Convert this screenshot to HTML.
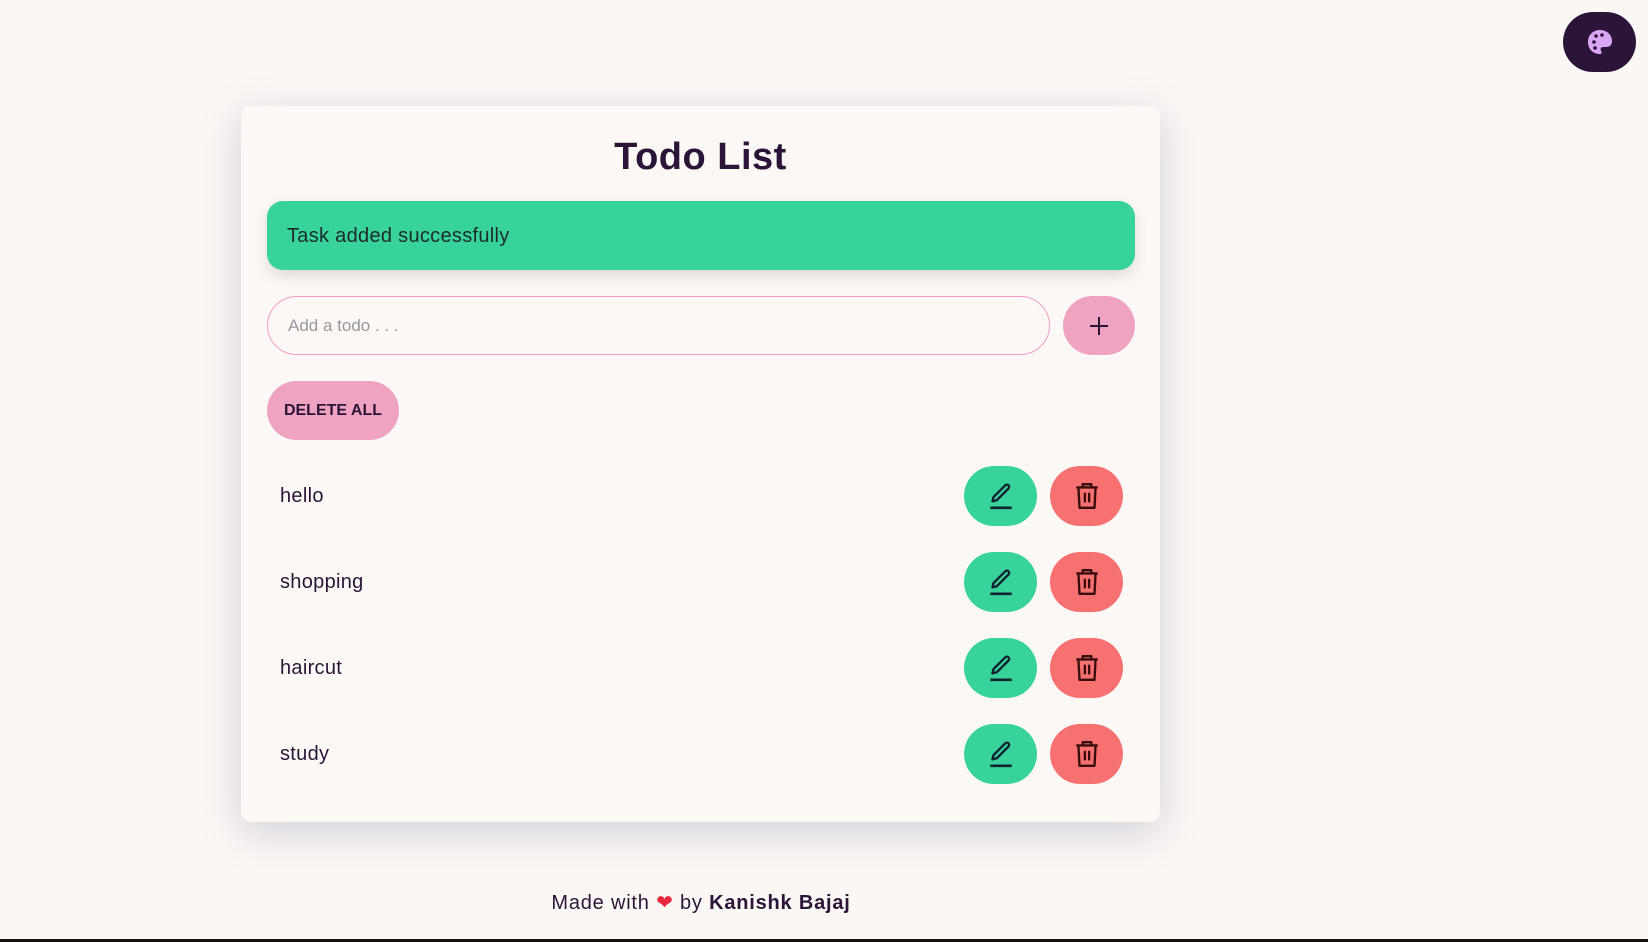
<!DOCTYPE html>
<html><head><style>
*{box-sizing:border-box;margin:0;padding:0}
body{width:1648px;height:942px;background:#fbf7f4;font-family:"Liberation Sans",sans-serif;color:#2a1538;position:relative;overflow:hidden}
.card{position:absolute;left:241px;top:106px;width:919px;height:716px;background:#fcf8f5;border-radius:10px;box-shadow:0 10px 40px rgba(90,90,150,.25)}
h1{position:absolute;left:241px;width:919px;top:136px;text-align:center;font-size:38px;font-weight:700;color:#2a1538;letter-spacing:.5px}
.alert{position:absolute;left:267px;top:201px;width:868px;height:69px;background:#38d39a;border-radius:16px;box-shadow:0 6px 14px rgba(0,0,0,.12);font-size:20px;line-height:71px;padding-left:20px;color:#1f2a2a;letter-spacing:.3px}
.inp{position:absolute;left:267px;top:296px;width:783px;height:59px;border:1px solid #ef9fbf;border-radius:30px;font-size:17px;line-height:57px;padding-left:20px;color:#9a96a0}
.add{position:absolute;left:1063px;top:296px;width:72px;height:59px;border-radius:30px;background:#f0a3c0;display:flex;align-items:center;justify-content:center}
.del{position:absolute;left:267px;top:381px;width:132px;height:59px;border-radius:30px;background:#f0a3c0;font-size:16px;font-weight:700;text-align:center;line-height:59px;color:#2a1538}
.item{position:absolute;left:280px;font-size:20px;color:#2a1538;letter-spacing:.3px}
.btn{position:absolute;width:73px;height:60px;border-radius:30px;display:flex;align-items:center;justify-content:center}
.e{left:964px;background:#38d39a}.d{left:1050px;background:#f87171}
.foot{position:absolute;left:0;width:1402px;top:890px;text-align:center;font-size:20px;color:#2a1538;letter-spacing:.8px}
.pal{position:absolute;left:1563px;top:12px;width:73px;height:60px;border-radius:30px;background:#2a1538;display:flex;align-items:center;justify-content:center}
.line{position:absolute;left:0;top:939px;width:1648px;height:3px;background:#111}
</style></head><body>
<div class="card"></div>
<h1>Todo List</h1>
<div class="alert">Task added successfully</div>
<div class="inp">Add a todo . . .</div>
<div class="add"><svg width="24" height="24" viewBox="0 0 24 24"><path d="M12 3v18M3 12h18" stroke="#2a1538" stroke-width="2"/></svg></div>
<div class="del">DELETE ALL</div>
<div class="item" style="top:485px">hello</div>
<div class="item" style="top:571px">shopping</div>
<div class="item" style="top:657px">haircut</div>
<div class="item" style="top:743px">study</div>
<div class="btn e" style="top:466px"><svg width="28" height="30" viewBox="0 0 26 28"><path d="M5 19l1-4L17 4a2 2 0 0 1 3 3L9 18z" fill="none" stroke="#123" stroke-width="2.2" stroke-linejoin="round"/><path d="M3 25h20" stroke="#123" stroke-width="2.4"/></svg></div>
<div class="btn d" style="top:466px"><svg width="28" height="30" viewBox="0 0 26 28"><path d="M3 6h20M9 6V3h8v3M5 6l1 19h14l1-19M11 11v9M15 11v9" fill="none" stroke="#3a0d0d" stroke-width="2.2" stroke-linejoin="round"/></svg></div>
<div class="btn e" style="top:552px"><svg width="28" height="30" viewBox="0 0 26 28"><path d="M5 19l1-4L17 4a2 2 0 0 1 3 3L9 18z" fill="none" stroke="#123" stroke-width="2.2" stroke-linejoin="round"/><path d="M3 25h20" stroke="#123" stroke-width="2.4"/></svg></div>
<div class="btn d" style="top:552px"><svg width="28" height="30" viewBox="0 0 26 28"><path d="M3 6h20M9 6V3h8v3M5 6l1 19h14l1-19M11 11v9M15 11v9" fill="none" stroke="#3a0d0d" stroke-width="2.2" stroke-linejoin="round"/></svg></div>
<div class="btn e" style="top:638px"><svg width="28" height="30" viewBox="0 0 26 28"><path d="M5 19l1-4L17 4a2 2 0 0 1 3 3L9 18z" fill="none" stroke="#123" stroke-width="2.2" stroke-linejoin="round"/><path d="M3 25h20" stroke="#123" stroke-width="2.4"/></svg></div>
<div class="btn d" style="top:638px"><svg width="28" height="30" viewBox="0 0 26 28"><path d="M3 6h20M9 6V3h8v3M5 6l1 19h14l1-19M11 11v9M15 11v9" fill="none" stroke="#3a0d0d" stroke-width="2.2" stroke-linejoin="round"/></svg></div>
<div class="btn e" style="top:724px"><svg width="28" height="30" viewBox="0 0 26 28"><path d="M5 19l1-4L17 4a2 2 0 0 1 3 3L9 18z" fill="none" stroke="#123" stroke-width="2.2" stroke-linejoin="round"/><path d="M3 25h20" stroke="#123" stroke-width="2.4"/></svg></div>
<div class="btn d" style="top:724px"><svg width="28" height="30" viewBox="0 0 26 28"><path d="M3 6h20M9 6V3h8v3M5 6l1 19h14l1-19M11 11v9M15 11v9" fill="none" stroke="#3a0d0d" stroke-width="2.2" stroke-linejoin="round"/></svg></div>
<div class="foot">Made with <span style="color:#e8283c">❤</span> by <b>Kanishk Bajaj</b></div>
<div class="pal"><svg width="28" height="28" viewBox="0 0 28 28"><path d="M14 2C7 2 2 7 2 14s5 12 12 12c2 0 2-2 1-3-1-2 0-4 2-4h3c4 0 6-2 6-6 0-6-5-11-12-11z" fill="#d8a6f5"/><circle cx="8" cy="14" r="1.8" fill="#2a1538"/><circle cx="10" cy="8" r="1.8" fill="#2a1538"/><circle cx="16" cy="7" r="1.8" fill="#2a1538"/><circle cx="9" cy="20" r="1.8" fill="#2a1538"/></svg></div>
<div class="line"></div>
</body></html>
